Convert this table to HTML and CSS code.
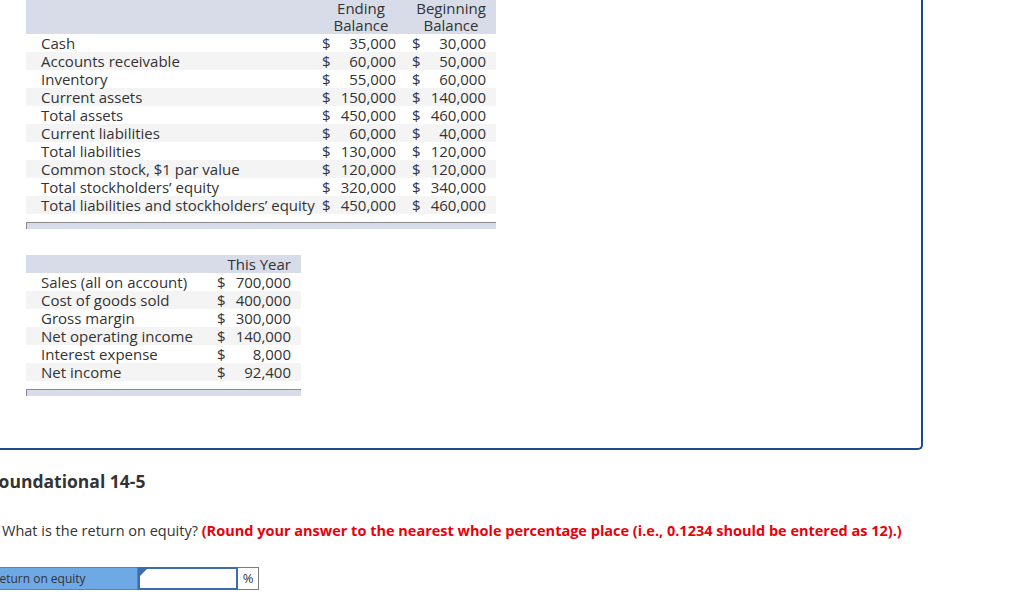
FILE: index.html
```html
<!DOCTYPE html>
<html>
<head>
<meta charset="utf-8">
<link rel="stylesheet" href="styles.css">
</head>
<body>
<div class="frame">
  <table class="fin bal">
    <colgroup><col class="c-label"><col class="c-num"><col class="c-num"></colgroup>
    <thead>
      <tr class="head"><th></th><th class="ctr">Ending<br>Balance</th><th class="ctr">Beginning<br>Balance</th></tr>
    </thead>
    <tbody>
      <tr><td class="lbl">Cash</td><td><div class="amt"><span>$</span><span>35,000</span></div></td><td><div class="amt"><span>$</span><span>30,000</span></div></td></tr>
      <tr class="alt"><td class="lbl">Accounts receivable</td><td><div class="amt"><span>$</span><span>60,000</span></div></td><td><div class="amt"><span>$</span><span>50,000</span></div></td></tr>
      <tr><td class="lbl">Inventory</td><td><div class="amt"><span>$</span><span>55,000</span></div></td><td><div class="amt"><span>$</span><span>60,000</span></div></td></tr>
      <tr class="alt"><td class="lbl">Current assets</td><td><div class="amt"><span>$</span><span>150,000</span></div></td><td><div class="amt"><span>$</span><span>140,000</span></div></td></tr>
      <tr><td class="lbl">Total assets</td><td><div class="amt"><span>$</span><span>450,000</span></div></td><td><div class="amt"><span>$</span><span>460,000</span></div></td></tr>
      <tr class="alt"><td class="lbl">Current liabilities</td><td><div class="amt"><span>$</span><span>60,000</span></div></td><td><div class="amt"><span>$</span><span>40,000</span></div></td></tr>
      <tr><td class="lbl">Total liabilities</td><td><div class="amt"><span>$</span><span>130,000</span></div></td><td><div class="amt"><span>$</span><span>120,000</span></div></td></tr>
      <tr class="alt"><td class="lbl">Common stock, $1 par value</td><td><div class="amt"><span>$</span><span>120,000</span></div></td><td><div class="amt"><span>$</span><span>120,000</span></div></td></tr>
      <tr><td class="lbl">Total stockholders’ equity</td><td><div class="amt"><span>$</span><span>320,000</span></div></td><td><div class="amt"><span>$</span><span>340,000</span></div></td></tr>
      <tr class="alt"><td class="lbl">Total liabilities and stockholders’ equity</td><td><div class="amt"><span>$</span><span>450,000</span></div></td><td><div class="amt"><span>$</span><span>460,000</span></div></td></tr>
    </tbody>
  </table>
  <div class="foot bal-foot"></div>

  <table class="fin inc">
    <colgroup><col class="c-label2"><col class="c-num"></colgroup>
    <thead>
      <tr class="head1"><th></th><th class="rgt">This Year</th></tr>
    </thead>
    <tbody>
      <tr><td class="lbl">Sales (all on account)</td><td><div class="amt"><span>$</span><span>700,000</span></div></td></tr>
      <tr class="alt"><td class="lbl">Cost of goods sold</td><td><div class="amt"><span>$</span><span>400,000</span></div></td></tr>
      <tr><td class="lbl">Gross margin</td><td><div class="amt"><span>$</span><span>300,000</span></div></td></tr>
      <tr class="alt"><td class="lbl">Net operating income</td><td><div class="amt"><span>$</span><span>140,000</span></div></td></tr>
      <tr><td class="lbl">Interest expense</td><td><div class="amt"><span>$</span><span>8,000</span></div></td></tr>
      <tr class="alt"><td class="lbl">Net income</td><td><div class="amt"><span>$</span><span>92,400</span></div></td></tr>
    </tbody>
  </table>
  <div class="foot inc-foot"></div>
</div>

<h2 class="title">Foundational 14-5</h2>

<p class="question">What is the return on equity? <strong class="hint">(Round your answer to the nearest whole percentage place (i.e., 0.1234 should be entered as 12).)</strong></p>

<div class="answer">
  <div class="ans-label">Return on equity</div>
  <div class="ans-input"><span class="flag"></span></div>
  <div class="ans-unit">%</div>
</div>
</body>
</html>
```

FILE: styles.css
```css
html, body {
  margin: 0;
  padding: 0;
  background: #fff;
  overflow: hidden;
}
body {
  font-family: "Open Sans", "Liberation Sans", sans-serif;
  color: #333;
  font-size: 14px;
}
.frame {
  box-sizing: content-box;
  margin-left: -26px;
  padding-left: 52px;
  width: 895px;
  height: 448px;
  border-right: 2px solid #1b4b8a;
  border-bottom: 2px solid #1b4b8a;
  border-bottom-right-radius: 5px;
}
.fin {
  border-collapse: collapse;
  table-layout: fixed;
  font-size: 15px;
  line-height: 18px;
}
.fin td, .fin th {
  padding: 0;
  font-weight: normal;
  white-space: nowrap;
}
.bal { width: 470px; }
.inc { width: 275px; margin-top: 26px; }
.c-label { width: 290px; }
.c-label2 { width: 185px; }
.c-num { width: 90px; }
.head th {
  background: #d7dce8;
  height: 34px;
  line-height: 17px;
  vertical-align: middle;
}
.head1 th {
  background: #d7dce8;
  height: 18px;
}
.ctr { text-align: center; }
.rgt { text-align: right; padding-right: 10px !important; }
.fin tbody tr { height: 18px; }
.fin tr.alt td { background: #f4f4f4; }
.lbl { padding-left: 15px !important; }
.amt {
  display: flex;
  justify-content: space-between;
  padding: 0 10px 0 6px;
}
.foot {
  height: 7px;
  background: #d7dce8;
  border-top: 1px solid #8c8c8c;
  border-left: 1px solid #8c8c8c;
  box-sizing: border-box;
  margin-top: 8px;
}
.bal-foot { width: 470px; }
.inc-foot { width: 275px; }
.title {
  margin: 20px 0 0 -11px;
  font-size: 17.5px;
  font-weight: bold;
  color: #333;
  line-height: 22px;
}
.question {
  margin: 30px 0 0 2px;
  font-size: 14.5px;
  line-height: 18px;
}
.hint {
  color: #e8000b;
  font-weight: bold;
}
.answer {
  display: flex;
  margin-top: 27px;
  margin-left: -12px;
  height: 23px;
}
.ans-label {
  width: 150px;
  background: #6ea8e5;
  border: 1px solid #7c7c7c;
  box-sizing: border-box;
  padding-left: 3px;
  font-size: 12px;
  line-height: 21px;
  color: #333;
}
.ans-input {
  position: relative;
  width: 100px;
  border: 2px solid #3a6db4;
  box-sizing: border-box;
  background: #fff;
}
.flag {
  position: absolute;
  left: 0;
  top: 0;
  width: 0;
  height: 0;
  border-top: 7px solid #3a6db4;
  border-right: 7px solid transparent;
}
.ans-unit {
  width: 21px;
  border: 1px solid #7c7c7c;
  border-left: none;
  box-sizing: border-box;
  text-align: center;
  font-size: 13px;
  line-height: 21px;
}
```
